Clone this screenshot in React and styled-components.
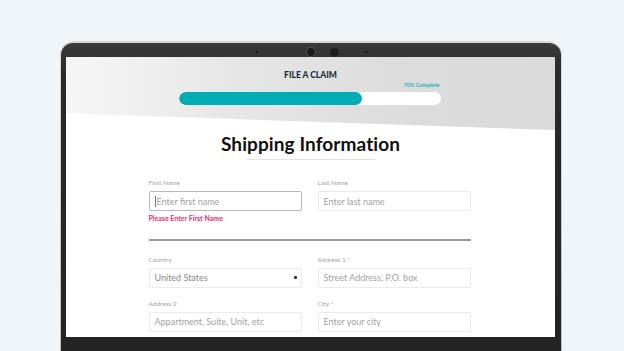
import React from "react";
import styled, { createGlobalStyle } from "styled-components";

const Global = createGlobalStyle`
  html, body { margin: 0; padding: 0; }
  body {
    background: #f0f5f9;
    font-family: "Lato", "Liberation Sans", sans-serif;
    overflow: hidden;
  }
`;

const Page = styled.div`
  width: 624px;
  height: 351px;
  padding-top: 41px;
  box-sizing: border-box;
  display: flex;
  justify-content: center;
  overflow: hidden;
`;

const Laptop = styled.div`
  width: 502px;
  height: 320px;
  margin-left: -2px;
  background: linear-gradient(180deg, #d8d8d8 0%, #bdbdbd 100%);
  border-radius: 14px 14px 0 0;
  padding: 2px 1px 0 1px;
  box-sizing: border-box;
`;

const Bezel = styled.div`
  height: 100%;
  background: linear-gradient(180deg, #3a3a3a 0%, #2a2a2a 10%, #232323 100%);
  border-radius: 12px 12px 0 0;
  padding: 14px 6px 0 5px;
  box-sizing: border-box;
  display: flex;
  flex-direction: column;
  position: relative;
`;

const CameraBar = styled.div`
  position: absolute;
  top: 4px;
  left: 0;
  right: 0;
  height: 10px;
  display: flex;
  align-items: center;
  padding-left: 195px;
`;

const Dot = styled.span`
  flex: none;
  width: ${(p) => p.$size}px;
  height: ${(p) => p.$size}px;
  border-radius: 50%;
  background: ${(p) => p.$color};
  margin-left: ${(p) => p.$ml || 0}px;
  box-shadow: ${(p) => (p.$ring ? "0 0 0 1px #505050" : "none")};
`;

const Screen = styled.div`
  height: 280px;
  background: #ffffff;
  overflow: hidden;
  display: flex;
  flex-direction: column;
  align-items: center;
`;

const Header = styled.div`
  align-self: stretch;
  height: 73px;
  flex: none;
  background: linear-gradient(90deg, #f6f6f6 0%, #e6e6e6 35%, #dcdcdc 70%, #dadada 100%);
  clip-path: polygon(0 0, 100% 0, 100% 100%, 0 77%);
  display: flex;
  flex-direction: column;
  align-items: center;
  padding-top: 12px;
  box-sizing: border-box;
`;

const Title = styled.div`
  font-family: "Lato", sans-serif;
  font-weight: 900;
  font-size: 8.5px;
  color: #1b2f3d;
  line-height: 10px;
  margin-top: 1px;
`;

const ProgressWrap = styled.div`
  width: 262px;
  margin: 1px 2px 0 0;
  display: flex;
  flex-direction: column;
`;

const ProgressLabel = styled.div`
  align-self: flex-end;
  font-size: 5.5px;
  font-weight: 700;
  color: #1fb2bc;
  line-height: 8px;
  margin-right: 1px;
`;

const Track = styled.div`
  height: 13px;
  margin-top: 3px;
  border-radius: 7px;
  background: #ffffff;
  overflow: hidden;
`;

const Fill = styled.div`
  height: 100%;
  background: #00adb5;
  border-radius: 7px;
`;

const Heading = styled.h1`
  margin: 2px 0 0;
  font-family: "Lato", sans-serif;
  font-weight: 700;
  font-size: 19px;
  color: #111;
  line-height: 24px;
  letter-spacing: 0.1px;
`;

const Underline = styled.div`
  width: 128px;
  height: 1px;
  background: #e2e2e2;
  margin-top: 3px;
`;

const Form = styled.div`
  width: 322px;
  margin: 19px 2px 0 0;
  display: flex;
  flex-direction: column;
`;

const Row = styled.div`
  display: grid;
  grid-template-columns: 153px 153px;
  column-gap: 16px;
  margin-bottom: ${(p) => p.$mb || 0}px;
`;

const Field = styled.div`
  display: flex;
  flex-direction: column;
`;

const Label = styled.label`
  font-size: 6.5px;
  color: #a4a4a4;
  line-height: 8px;
  margin-bottom: 4px;
`;

const Box = styled.div`
  height: 20px;
  box-sizing: border-box;
  border: ${(p) => (p.$active ? "1.5px solid #b9b9b9" : "1px solid #ebebeb")};
  border-radius: 2px;
  display: flex;
  align-items: center;
  padding: 0 5px 0 5px;
  font-size: 9px;
  color: ${(p) => (p.$value ? "#8a8a8a" : "#a2a2a2")};
  background: #fff;
  justify-content: space-between;
`;

const Caret = styled.span`
  width: 1px;
  height: 11px;
  background: #777;
  margin-right: 1px;
`;

const BoxText = styled.span`
  display: flex;
  align-items: center;
  flex: 1;
`;

const ArrowDot = styled.span`
  width: 3px;
  height: 3px;
  background: #333;
  border-radius: 1px;
  margin-right: -1px;
`;

const Error = styled.div`
  font-size: 7px;
  font-weight: 700;
  color: #e62f6b;
  line-height: 8px;
  margin-top: 3px;
`;

const Divider = styled.div`
  height: 1.5px;
  background: #9a9a9a;
  margin: 17px 0 15px;
`;

function Input({ label, placeholder, value, active, select }) {
  return (
    <Field>
      <Label>{label}</Label>
      <Box $active={active} $value={!!value}>
        <BoxText>
          {active && <Caret />}
          {value || placeholder}
        </BoxText>
        {select && <ArrowDot />}
      </Box>
    </Field>
  );
}

export default function App() {
  return (
    <>
      <Global />
      <Page>
        <Laptop>
          <Bezel>
            <CameraBar>
              <Dot $size={2} $color="#111" />
              <Dot $size={8} $color="#1c1c1c" $ml={49} $ring />
              <Dot $size={9} $color="#1e1e1e" $ml={15} />
              <Dot $size={2} $color="#111" $ml={26} />
            </CameraBar>
            <Screen>
              <Header>
                <Title>FILE A CLAIM</Title>
                <ProgressWrap>
                  <ProgressLabel>70% Complete</ProgressLabel>
                  <Track>
                    <Fill style={{ width: "70%" }} />
                  </Track>
                </ProgressWrap>
              </Header>
              <Heading>Shipping Information</Heading>
              <Underline />
              <Form>
                <Row>
                  <Field>
                    <Input label="First Name" placeholder="Enter first name" active />
                    <Error>Please Enter First Name</Error>
                  </Field>
                  <Input label="Last Name" placeholder="Enter last name" />
                </Row>
                <Divider />
                <Row $mb={12}>
                  <Input label="Country" value="United States" select />
                  <Input label="Address 1 *" placeholder="Street Address, P.O. box" />
                </Row>
                <Row>
                  <Input label="Address 2" placeholder="Appartment, Suite, Unit, etc" />
                  <Input label="City *" placeholder="Enter your city" />
                </Row>
              </Form>
            </Screen>
          </Bezel>
        </Laptop>
      </Page>
    </>
  );
}
